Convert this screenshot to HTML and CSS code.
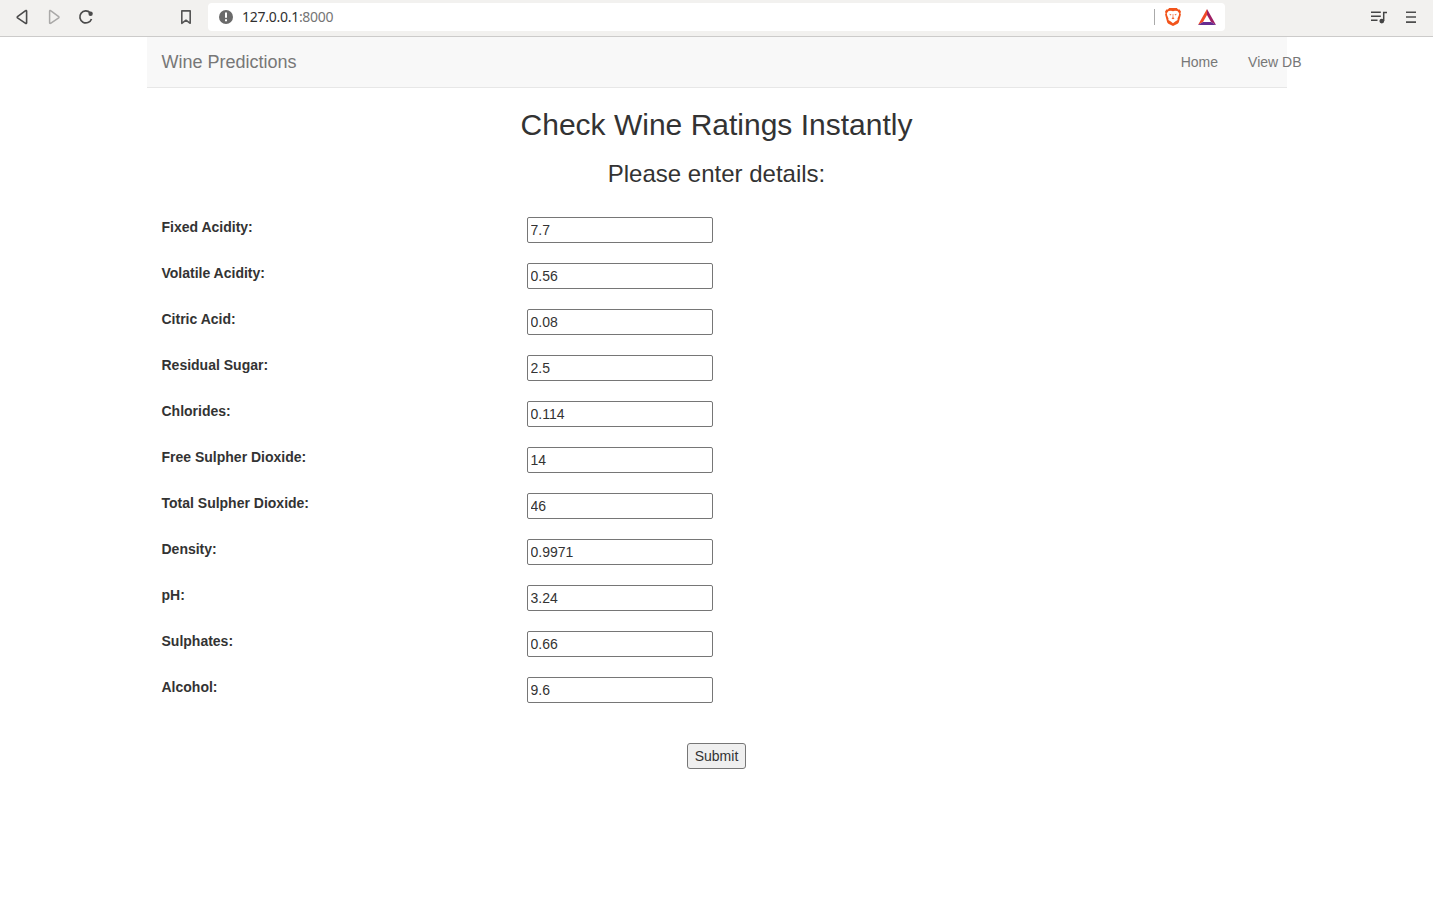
FILE: index.html
```html
<!DOCTYPE html>
<html lang="en">
<head>
<meta charset="utf-8">
<title>Wine Predictions</title>
<link rel="stylesheet" href="styles.css">
</head>
<body>
<header class="browser-bar">
  <div class="nav-icons">
    <svg width="16" height="16" viewBox="0 0 16 16" fill="none" stroke="#4b4b4b" stroke-width="1.6" stroke-linejoin="round"><path d="M12.6 2.5v11.4a.6.6 0 0 1-1 .4L3.5 8.8a.7.7 0 0 1 0-1.1l8.1-6.1a.6.6 0 0 1 1 .4z"/></svg>
    <svg width="16" height="16" viewBox="0 0 16 16" fill="none" stroke="#aaa9a8" stroke-width="1.5" stroke-linejoin="round"><path d="M3.6 2.5v11.4a.6.6 0 0 0 1 .4l8.1-5.5a.7.7 0 0 0 0-1.1L4.6 1.6a.6.6 0 0 0-1 .4z"/></svg>
    <svg width="16" height="16" viewBox="0 0 16 16" fill="none" stroke="#4b4b4b" stroke-width="1.7"><path d="M12.2 3.8A6 6 0 1 0 13.5 10"/><circle cx="12.6" cy="4.7" r="2.2" fill="#4b4b4b" stroke="none"/></svg>
  </div>
  <svg class="bookmark" width="16" height="16" viewBox="0 0 16 16" fill="none" stroke="#555" stroke-width="1.6" stroke-linejoin="round"><path d="M3.8 1.9h8.4v12.4L8 11.2l-4.2 3.1z"/></svg>
  <div class="address">
    <svg width="16" height="16" viewBox="0 0 16 16"><circle cx="8" cy="8" r="7" fill="#6a6a6a"/><path d="M7 3.5h2v5.2H7zM7 10.2h2v2H7z" fill="#fff"/></svg>
    <span class="url">127.0.0.1<span class="port">:8000</span></span>
    <span class="divider"></span>
    <svg class="brave" width="18" height="20" viewBox="0 0 18 20"><path d="M5.2 1h7.6l1.4 1.5 1.5.1 1.3 2.2-.6 1.5.5 1.2-2 7.6c-.2.8-.7 1.2-1.3 1.7L9 19l-4.6-2.2c-.6-.5-1.1-.9-1.3-1.7l-2-7.6.5-1.2L1 4.8l1.3-2.2 1.5-.1z" fill="#f2541b"/><path d="M9 4.3 11 3.7l2.4.4L15.2 6.2l-.4 2.2-1.3 3 .1 1.5-2.4 1.6L9 16.2l-2.2-1.7-2.4-1.6.1-1.5-1.3-3-.4-2.2 1.8-2.1L7 3.7z" fill="#fff"/><path d="m5 6.8 2.4.8-.6.8zM13 6.8l-2.4.8.6.8zM8.7 7h.6v3.6l1.2.7L9 12.2l-1.5-.9 1.2-.7z" fill="#f2541b"/></svg>
    <svg width="18" height="16" viewBox="0 0 18 16"><path d="M9 0 0 16l5-3 4-7z" fill="#f04a28"/><path d="M9 0v6l4 7 5 3z" fill="#9e1f63"/><path d="M0 16h18l-5-3H5z" fill="#662d91"/></svg>
  </div>
  <div class="menu-icons">
    <svg width="18" height="16" viewBox="0 0 18 16" fill="none" stroke="#444" stroke-width="1.5"><path d="M1 3.3h9.8M1 7.2h9.8M1 11.3h6.5M13.7 12V3.4H17"/><circle cx="11.8" cy="12.1" r="2.4" fill="#444" stroke="none"/></svg>
    <svg width="16" height="16" viewBox="0 0 16 16" stroke="#4d4d4d" stroke-width="1.6"><path d="M3 3.2h10M3 8h10M3 13.1h10"/></svg>
  </div>
</header>
<main class="container">
  <nav class="navbar">
    <a class="brand">Wine Predictions</a>
    <div class="links"><a>Home</a><a>View DB</a></div>
  </nav>
  <h2>Check Wine Ratings Instantly</h2>
  <h3>Please enter details:</h3>
  <form class="details">
    <div class="field"><label for="fixed">Fixed Acidity:</label><input id="fixed" type="text" value="7.7"></div>
    <div class="field"><label for="volatile">Volatile Acidity:</label><input id="volatile" type="text" value="0.56"></div>
    <div class="field"><label for="citric">Citric Acid:</label><input id="citric" type="text" value="0.08"></div>
    <div class="field"><label for="sugar">Residual Sugar:</label><input id="sugar" type="text" value="2.5"></div>
    <div class="field"><label for="chlorides">Chlorides:</label><input id="chlorides" type="text" value="0.114"></div>
    <div class="field"><label for="free">Free Sulpher Dioxide:</label><input id="free" type="text" value="14"></div>
    <div class="field"><label for="total">Total Sulpher Dioxide:</label><input id="total" type="text" value="46"></div>
    <div class="field"><label for="density">Density:</label><input id="density" type="text" value="0.9971"></div>
    <div class="field"><label for="ph">pH:</label><input id="ph" type="text" value="3.24"></div>
    <div class="field"><label for="sulphates">Sulphates:</label><input id="sulphates" type="text" value="0.66"></div>
    <div class="field"><label for="alcohol">Alcohol:</label><input id="alcohol" type="text" value="9.6"></div>
    <button class="submit" type="button">Submit</button>
  </form>
</main>
</body>
</html>
```

FILE: styles.css
```css
* { box-sizing: border-box; }
body {
  margin: 0;
  background: #fff;
  color: #333;
  font: 14px/20px "Liberation Sans", Arial, sans-serif;
}
svg { display: block; flex: none; }
.browser-bar {
  display: flex;
  height: 37px;
  padding: 3px 14px 5px;
  align-items: center;
  background: #f2f1ef;
  border-bottom: 1px solid #cccbca;
}
.nav-icons { display: flex; gap: 16px; }
.bookmark { margin-left: 84px; }
.address {
  display: flex;
  align-items: center;
  width: 1017px;
  height: 28px;
  margin-left: 14px;
  padding: 0 9px 0 10px;
  background: #fff;
  border-radius: 4px;
}
.url {
  margin-left: 8px;
  font: 14px/18px "Noto Sans", sans-serif;
  letter-spacing: -0.27px;
  color: #303030;
}
.port { color: #757575; }
.divider {
  width: 1px;
  height: 16px;
  margin-left: auto;
  background: #aaa;
}
.brave { margin: 0 16px 0 9px; }
.menu-icons {
  display: flex;
  gap: 15px;
  margin-left: auto;
}
.container { width: 1140px; margin: 0 auto; }
.navbar {
  display: flex;
  align-items: center;
  justify-content: space-between;
  height: 51px;
  padding-left: 15px;
  background: #f8f8f8;
  border-bottom: 1px solid #e7e7e7;
  color: #777;
}
.brand { font-size: 18px; }
.links { display: flex; gap: 30px; margin-right: -15px; }
h2, h3 { font-weight: 500; line-height: 1.1; text-align: center; }
h2 { margin: 20px 0 10px; font-size: 30px; }
h3 { margin: 20px 0 30px; font-size: 24px; line-height: 26px; }
.details { display: flex; flex-direction: column; gap: 20px; padding: 0 15px; }
.field { display: grid; grid-template-columns: 365px 186px; height: 26px; }
.field label { font-weight: 700; }
.field input {
  width: 186px;
  height: 26px;
  padding: 1px 2px 1px 3px;
  border: 1px solid #767676;
  border-radius: 2px;
  background: #fff;
  color: #333;
  font: inherit;
}
.submit {
  align-self: center;
  width: 59px;
  height: 26px;
  margin-top: 20px;
  padding: 0;
  border: 1px solid #767676;
  border-radius: 3px;
  background: #efefef;
  color: #333;
  font: inherit;
}
```
